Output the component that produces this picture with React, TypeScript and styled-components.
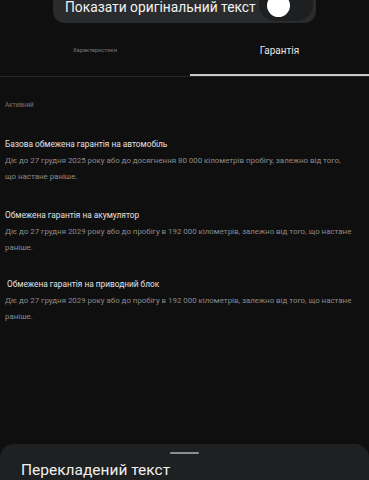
import React from "react";
import styled, { createGlobalStyle } from "styled-components";

const Global = createGlobalStyle`
  html, body { margin: 0; padding: 0; background: #0f0f10; }
  body { font-family: Roboto, "Noto Sans", "Liberation Sans", sans-serif; }
`;

const Page = styled.div`
  width: 369px;
  height: 480px;
  overflow: hidden;
  background: #0f0f10;
  display: flex;
  flex-direction: column;
`;

const Pill = styled.div`
  width: 263px;
  height: 37px;
  margin: -14px auto 0;
  box-sizing: border-box;
  border-radius: 12px;
  background: #2a2b2d;
  display: flex;
  align-items: center;
  padding: 0 3px 0 12px;
  gap: 1px;
`;

const PillText = styled.span`
  color: #f2f2f2;
  font-size: 13.8px;
  line-height: 18px;
  white-space: nowrap;
  flex: 1;
  margin-top: 5px;
`;

const Track = styled.div`
  position: relative;
  width: 54px;
  height: 32px;
  border-radius: 16px;
  background: #1e1f21;
  flex-shrink: 0;
`;

const Thumb = styled.div`
  position: absolute;
  left: 8px;
  top: 5px;
  width: 23px;
  height: 23px;
  border-radius: 50%;
  background: #ffffff;
`;

const Tabs = styled.div`
  display: grid;
  grid-template-columns: 190px 1fr;
  height: 53px;
  border-bottom: 1px solid #262626;
`;

const Tab = styled.div<{ $active?: boolean }>`
  display: flex;
  align-items: center;
  justify-content: center;
  color: ${(p) => (p.$active ? "#e6e6e6" : "#7a7a7a")};
  font-size: ${(p) => (p.$active ? "10px" : "5.8px")};
  box-shadow: ${(p) => (p.$active ? "inset 0 -2px 0 #c9c9c9" : "none")};
  padding-top: 1px;
`;

const Content = styled.div`
  display: flex;
  flex-direction: column;
  padding: 24px 0 0 5px;
`;

const Status = styled.div`
  color: #777;
  font-size: 6.3px;
  line-height: 8px;
`;

const Item = styled.div<{ $top: number }>`
  margin-top: ${(p) => p.$top}px;
  display: flex;
  flex-direction: column;
  gap: 3px;
`;

const Title = styled.div<{ $indent?: number }>`
  color: #e2e2e2;
  font-size: 8.3px;
  line-height: 12px;
  padding-left: ${(p) => p.$indent ?? 0}px;
`;

const Desc = styled.div<{ $width: number }>`
  color: #8b8b8b;
  font-size: 7.9px;
  line-height: 16px;
  width: ${(p) => p.$width}px;
`;

const Sheet = styled.div`
  margin-top: auto;
  height: 36px;
  background: #1e2022;
  border-radius: 14px 14px 0 0;
  display: flex;
  flex-direction: column;
  align-items: flex-start;
  padding: 8px 0 0 21px;
  box-sizing: border-box;
`;

const Handle = styled.div`
  width: 29px;
  height: 3px;
  border-radius: 2px;
  background: #8c8e90;
  align-self: center;
  margin-left: -21px;
`;

const SheetTitle = styled.div`
  color: #f0f0f0;
  font-size: 15.5px;
  line-height: 20px;
  margin-top: 6px;
`;

const items = [
  {
    top: 29,
    indent: 0,
    width: 344,
    title: "Базова обмежена гарантія на автомобіль",
    desc: "Діє до 27 грудня 2025 року або до досягнення 80 000 кілометрів пробігу, залежно від того, що настане раніше.",
  },
  {
    top: 24,
    indent: 0,
    width: 349,
    title: "Обмежена гарантія на акумулятор",
    desc: "Діє до 27 грудня 2029 року або до пробігу в 192 000 кілометрів, залежно від того, що настане раніше.",
  },
  {
    top: 22,
    indent: 2,
    width: 349,
    title: "Обмежена гарантія на приводний блок",
    desc: "Діє до 27 грудня 2029 року або до пробігу в 192 000 кілометрів, залежно від того, що настане раніше.",
  },
];

export default function App() {
  return (
    <Page>
      <Global />
      <Pill>
        <PillText>Показати оригінальний текст</PillText>
        <Track>
          <Thumb />
        </Track>
      </Pill>
      <Tabs>
        <Tab>Характеристики</Tab>
        <Tab $active>Гарантія</Tab>
      </Tabs>
      <Content>
        <Status>Активний</Status>
        {items.map((it) => (
          <Item key={it.title} $top={it.top}>
            <Title $indent={it.indent}>{it.title}</Title>
            <Desc $width={it.width}>{it.desc}</Desc>
          </Item>
        ))}
      </Content>
      <Sheet>
        <Handle />
        <SheetTitle>Перекладений текст</SheetTitle>
      </Sheet>
    </Page>
  );
}
